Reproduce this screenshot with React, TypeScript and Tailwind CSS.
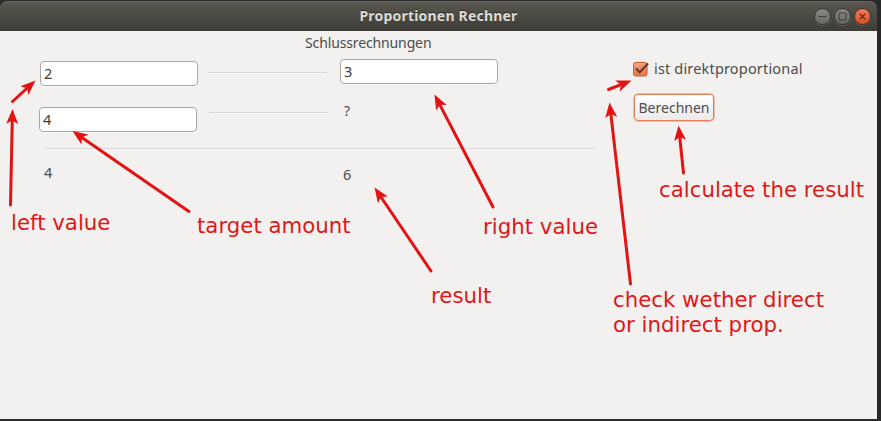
import { useState } from "react";

type Arrow = { from: [number, number]; to: [number, number] };

const arrows: Arrow[] = [
  { from: [12.5, 101.5], to: [35.5, 80.5] },
  { from: [10.5, 205], to: [12.5, 109] },
  { from: [189, 211.5], to: [72.5, 131] },
  { from: [493, 207], to: [434.5, 94.5] },
  { from: [431, 271], to: [374.5, 187.5] },
  { from: [683.5, 173], to: [678.5, 125.5] },
  { from: [608.5, 89.5], to: [631.5, 80.5] },
  { from: [630.5, 284], to: [609.5, 102.5] },
];

function ArrowMark({ from, to }: Arrow) {
  const dx = to[0] - from[0];
  const dy = to[1] - from[1];
  const length = Math.hypot(dx, dy);
  const angle = (Math.atan2(dy, dx) * 180) / Math.PI;
  return (
    <g transform={`translate(${to[0]} ${to[1]}) rotate(${angle})`} fill="#e41313">
      <path d={`M${-length} 0H-10`} stroke="#e41313" strokeWidth="3" strokeLinecap="round" />
      <path d="M0 0L-15 6L-11.5 0L-15 -6Z" />
    </g>
  );
}

function Separator({ className }: { className: string }) {
  return <div className={`h-[2px] shrink-0 border-t border-[#d8d7d5] bg-[#f8f8f7] ${className}`} />;
}

function Entry({ initial, className }: { initial: string; className: string }) {
  const [value, setValue] = useState(initial);
  return (
    <input
      value={value}
      onChange={(e) => setValue(e.target.value)}
      className={`h-[25px] w-[158px] shrink-0 rounded-[4px] border border-[#aaa6a0] bg-white px-[3px] pb-[2px] text-[14.5px] text-[#3c3c3c] shadow-[0_1px_0_#f9f9f8] outline-none ${className}`}
    />
  );
}

function WindowButton({ kind }: { kind: "min" | "max" | "close" }) {
  const close = kind === "close";
  return (
    <button
      aria-label={kind}
      className={`flex size-[17px] items-center justify-center rounded-full border border-[#353430] bg-linear-to-b shadow-[0_1px_0_#65635b] ${
        close ? "from-[#f47b57] to-[#dd4b1c]" : "from-[#8a8983] to-[#686761]"
      }`}
    >
      <svg className="shrink-0" width="15" height="15" viewBox="0 0 15 15" fill="none" stroke={close ? "#5b2112" : "#3b3a35"} strokeWidth="1">
        {kind === "min" && <path d="M3.5 7.5h8" />}
        {kind === "max" && <path d="M4 4h7v7H4z" />}
        {close && <path d="M4.7 4.7l5.6 5.6M10.3 4.7l-5.6 5.6" strokeWidth="1.2" />}
      </svg>
    </button>
  );
}

const note = "absolute whitespace-pre font-['DejaVu_Sans',sans-serif] text-[21.3px] leading-[25px] text-[#e01818]";

export default function App() {
  const [direct, setDirect] = useState(true);
  return (
    <div className="relative h-[421px] w-[881px] overflow-hidden bg-[#292929] font-['Noto_Sans',sans-serif] text-[14px] text-[#4c4c4c]">
      <div className="flex h-[419px] w-[877px] flex-col pt-px">
        <header className="grid h-[30px] shrink-0 grid-cols-[1fr_auto_1fr] items-center rounded-t-[7px] border-t border-[#68665c] bg-linear-to-b from-[#59574e] to-[#3d3c37] pb-[2px]">
          <span />
          <h1 className="text-[14px] leading-none font-bold tracking-[0.2px] text-[#dfdbd2] [text-shadow:0_-1px_0_#2b2a27]">Proportionen Rechner</h1>
          <div className="flex justify-end gap-[3px] pt-px pr-[6px]">
            <WindowButton kind="min" />
            <WindowButton kind="max" />
            <WindowButton kind="close" />
          </div>
        </header>
        <main className="flex-1 bg-[#f2f1ef]">
          <div className="flex h-[28px] pl-[305px]">
            <span className="leading-[24px] tracking-[-0.13px]">Schlussrechnungen</span>
          </div>
          <div className="flex">
            <div className="w-[600px]">
              <div className="flex h-[44px] items-start pl-[40px]">
                <Entry initial="2" className="mt-[2px]" />
                <Separator className="mt-[13px] ml-[9px] w-[120px]" />
                <Entry initial="3" className="ml-[13px]" />
              </div>
              <div className="flex h-[45px] items-start pl-[39px]">
                <Entry initial="4" className="mt-[4px]" />
                <Separator className="mt-[9px] ml-[12px] w-[120px]" />
                <span className="ml-[15px] leading-[16px]">?</span>
              </div>
              <Separator className="ml-[45px] w-[550px]" />
              <div className="flex pl-[44px] text-[14.5px]">
                <span className="mt-[13px] w-[299px] leading-[18px]">4</span>
                <span className="mt-[15px] leading-[18px]">6</span>
              </div>
            </div>
            <div className="flex flex-col items-start pl-[33px]">
              <label className="flex h-[20px] items-center gap-[5px]">
                <input type="checkbox" className="sr-only" checked={direct} onChange={() => setDirect(!direct)} />
                <svg width="16" height="16" viewBox="0 0 16 16" fill="none">
                  <defs>
                    <linearGradient id="check" x1="0" y1="0" x2="0" y2="1">
                      <stop stopColor="#f8a27f" />
                      <stop offset="1" stopColor="#ec7344" />
                    </linearGradient>
                  </defs>
                  <rect x=".5" y="1.5" width="13.5" height="13.5" rx="2" fill="url(#check)" stroke="#c35c36" />
                  {direct && <path d="M3 7.5L6.7 11.3L15 2.5" stroke="#613827" strokeWidth="2" />}
                </svg>
                <span className="text-[14.5px] tracking-[0.17px]">ist direktproportional</span>
              </label>
              <button className="mt-[15px] ml-px h-[27px] w-[80px] rounded-[4px] border border-[#e27f56] bg-linear-to-b from-white to-[#ebeaea] leading-none shadow-[0_0_0_1px_#f0bda8]">
                Berechnen
              </button>
            </div>
          </div>
        </main>
      </div>
      <svg className="pointer-events-none absolute inset-0" width="881" height="421">
        {arrows.map((a, i) => (
          <ArrowMark key={i} {...a} />
        ))}
      </svg>
      <p className={`${note} top-[210px] left-[11px]`}>left value</p>
      <p className={`${note} top-[213px] left-[197px]`}>target amount</p>
      <p className={`${note} top-[214px] left-[483px]`}>right value</p>
      <p className={`${note} top-[283px] left-[431px]`}>result</p>
      <p className={`${note} top-[177px] left-[659px]`}>calculate the result</p>
      <p className={`${note} top-[287px] left-[613px]`}>{"check wether direct\nor indirect prop."}</p>
    </div>
  );
}
